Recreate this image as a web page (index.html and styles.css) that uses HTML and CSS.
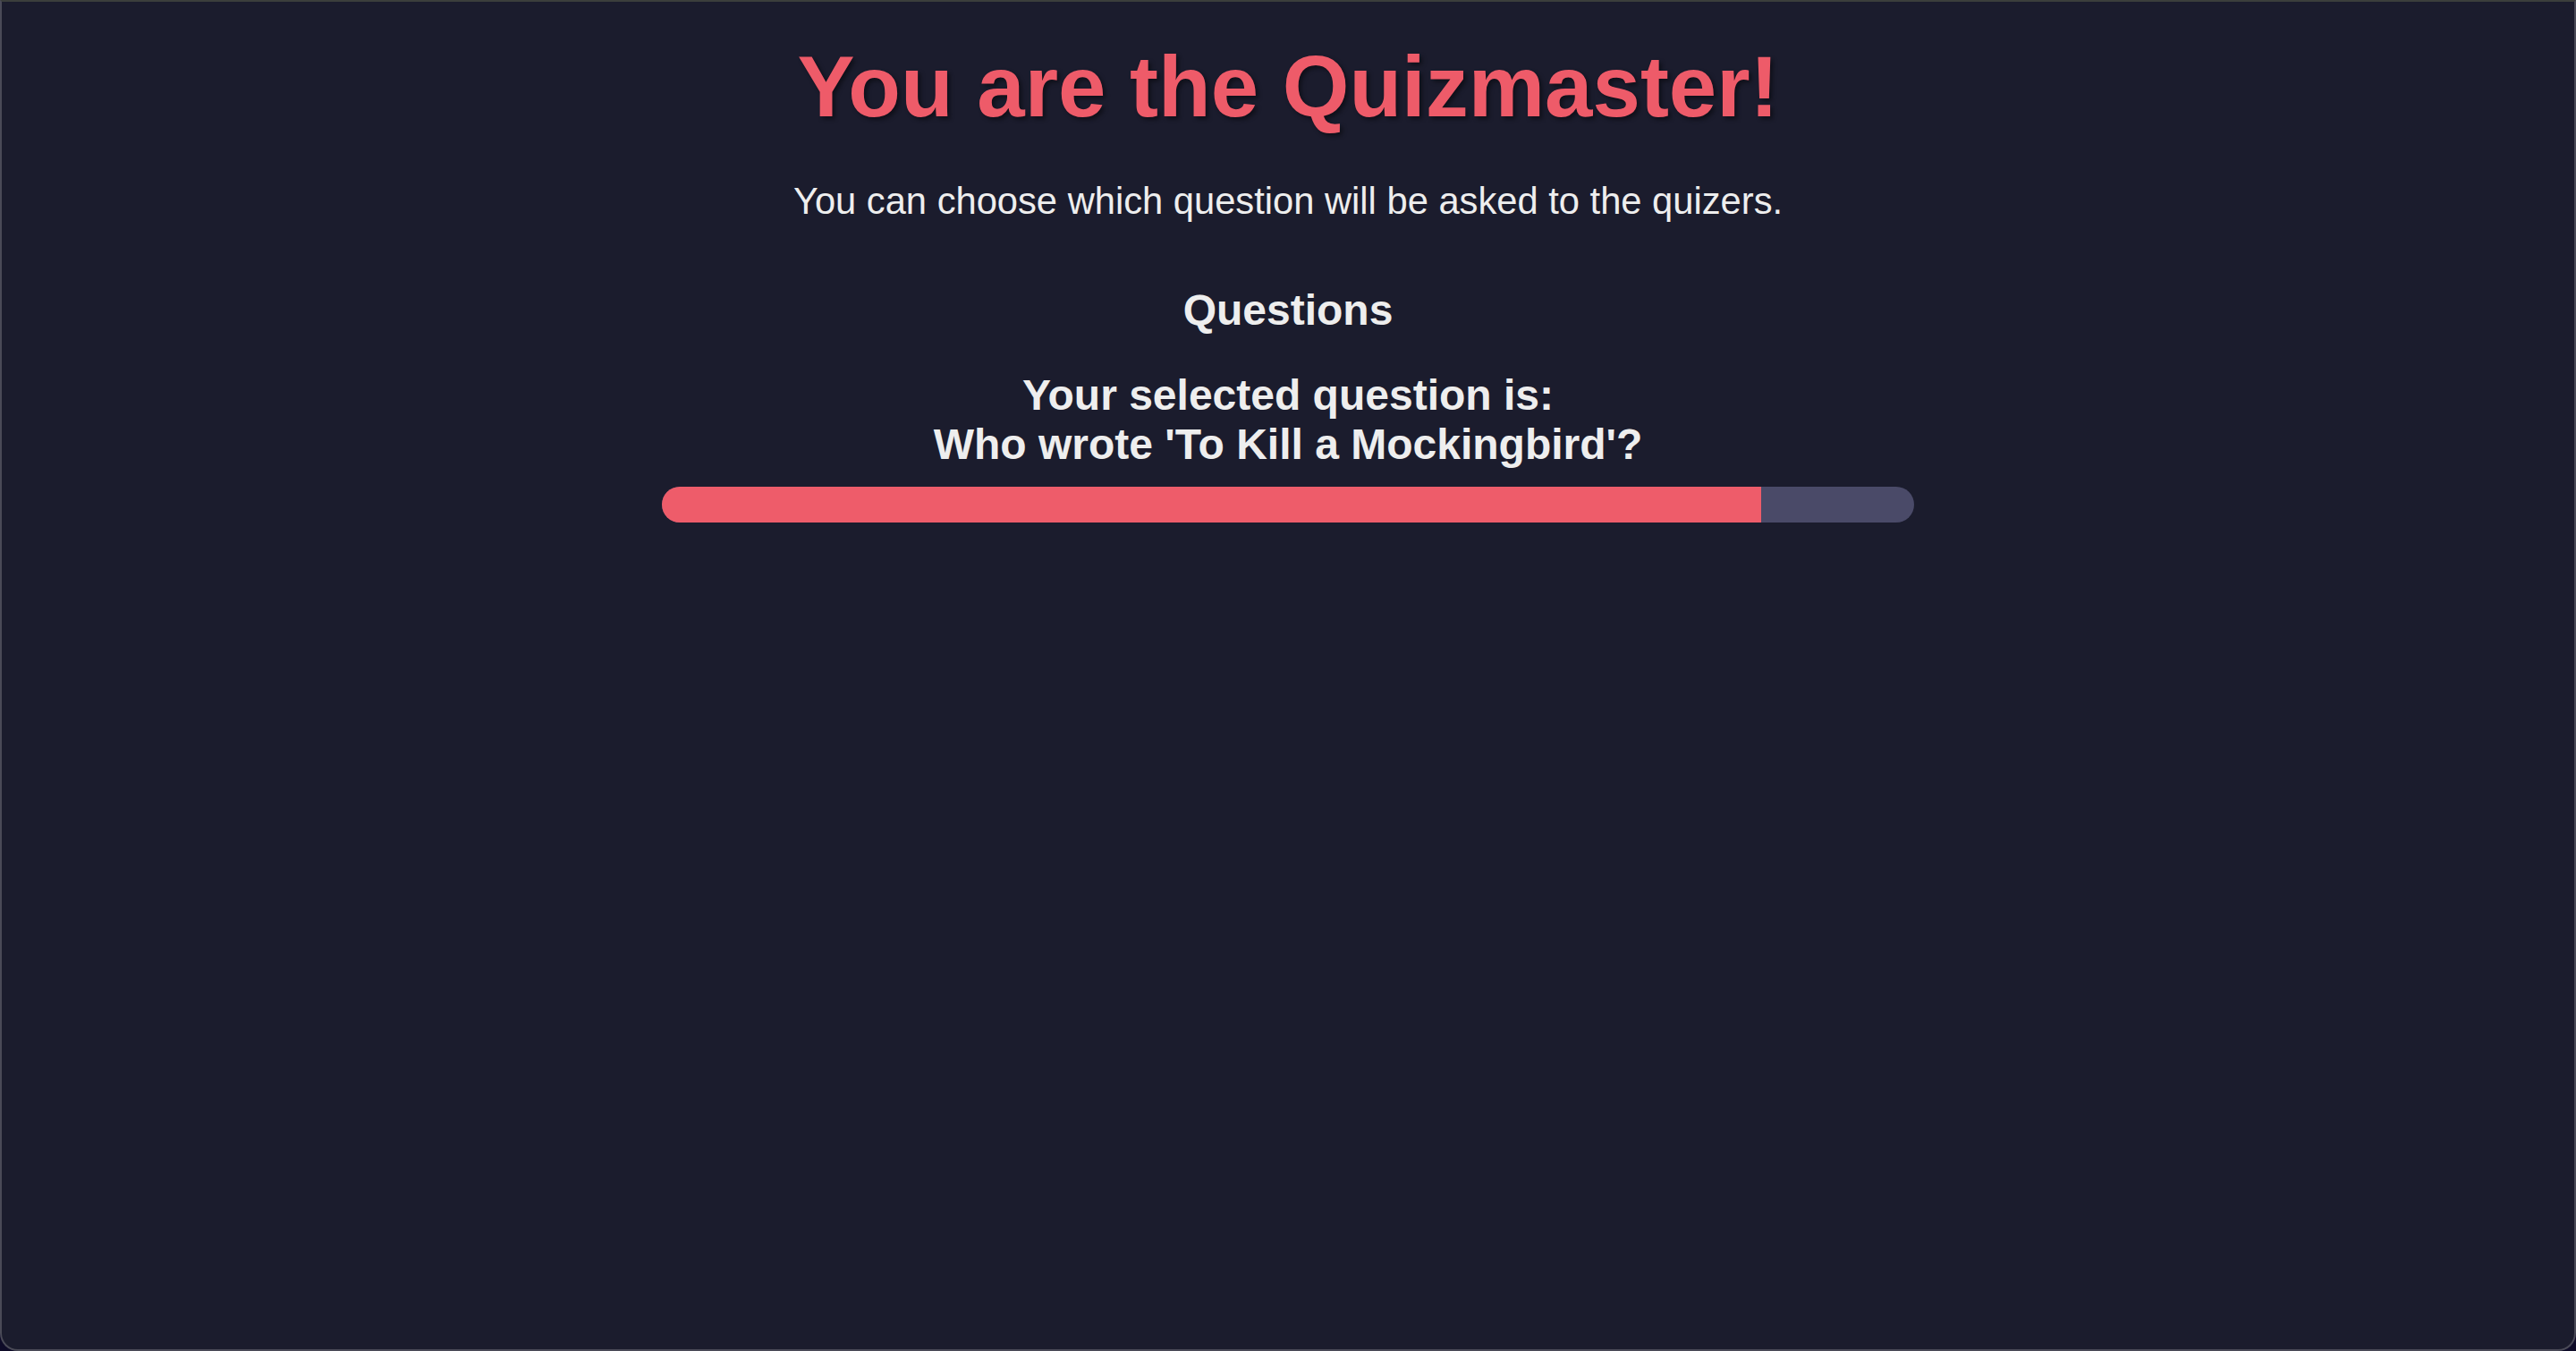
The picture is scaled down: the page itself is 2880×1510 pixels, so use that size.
FILE: index.html
```html
<!DOCTYPE html>
<html lang="en">
<head>
<meta charset="utf-8">
<title>Quizmaster</title>
<link rel="stylesheet" href="styles.css">
</head>
<body>
<div class="frame">
  <main class="content">
    <h1 class="title">You are the Quizmaster!</h1>
    <p class="subtitle">You can choose which question will be asked to the quizers.</p>
    <h2 class="section">Questions</h2>
    <h3 class="selected">Your selected question is:<br>Who wrote 'To Kill a Mockingbird'?</h3>
    <div class="progress"><div class="progress-fill" style="width: 87.8%"></div></div>
  </main>
</div>
</body>
</html>
```

FILE: styles.css
```css
html, body {
  margin: 0;
  padding: 0;
}
body {
  background: #0e0b28;
  font-family: "Liberation Sans", Arial, sans-serif;
}
.frame {
  box-sizing: border-box;
  height: 1510px;
  background: #1b1c2d;
  border: 2px solid #4a4a57;
  border-top-color: #3b3e3c;
  border-radius: 0 0 20px 20px;
}
.content {
  display: flex;
  flex-direction: column;
  align-items: center;
  padding-top: 40px;
}
.title {
  margin: 0;
  font-size: 96px;
  line-height: 1.15;
  font-weight: 700;
  color: #ee5b69;
  text-shadow: 3px 3px 5px rgba(0, 0, 0, 0.45);
}
.subtitle {
  margin: 49px 0 0;
  font-size: 41.7px;
  line-height: 1.15;
  color: #eeeeee;
}
.section {
  margin: 70px 0 0;
  font-size: 48px;
  line-height: 1.15;
  font-weight: 700;
  color: #eeeeee;
}
.selected {
  margin: 39px 0 0;
  font-size: 48px;
  line-height: 55px;
  font-weight: 700;
  color: #eeeeee;
  text-align: center;
}
.progress {
  margin-top: 20px;
  width: 1400px;
  height: 40px;
  border-radius: 20px;
  background: #4a4a68;
  overflow: hidden;
}
.progress-fill {
  height: 100%;
  background: #ee5c6a;
}
```
